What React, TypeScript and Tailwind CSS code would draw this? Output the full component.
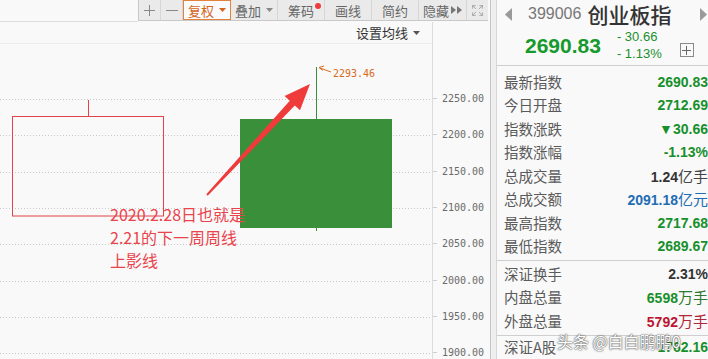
import { Expand } from "lucide-react";

// price -> y inside the plot canvas (canvas top sits 44px below the page top)
const py = (p: number) => Math.round(55 + (2250 - p) * 0.7267) + 0.5;

const LEVELS = [2250, 2200, 2150, 2100, 2050, 2000, 1950, 1900];

function arrowPoints(x1: number, y1: number, x2: number, y2: number) {
  const dx = x2 - x1;
  const dy = y2 - y1;
  const len = Math.hypot(dx, dy);
  const ux = dx / len;
  const uy = dy / len;
  const nx = -uy;
  const ny = ux;
  const head = 26;
  const hw = 10.5;
  const s0 = 1;
  const s1 = 3.4;
  const bx = x2 - ux * head;
  const by = y2 - uy * head;
  const pts = [
    [x1 + nx * s0, y1 + ny * s0],
    [bx + nx * s1, by + ny * s1],
    [bx + nx * hw, by + ny * hw],
    [x2, y2],
    [bx - nx * hw, by - ny * hw],
    [bx - nx * s1, by - ny * s1],
    [x1 - nx * s0, y1 - ny * s0],
  ];
  return pts.map((p) => p[0].toFixed(1) + "," + p[1].toFixed(1)).join(" ");
}

const GREEN = "text-[#17902b]";

const quote1 = [
  { label: "最新指数", value: "2690.83", color: GREEN },
  { label: "今日开盘", value: "2712.69", color: GREEN },
  { label: "指数涨跌", value: "▼30.66", color: GREEN },
  { label: "指数涨幅", value: "-1.13%", color: GREEN },
  { label: "总成交量", value: "1.24", unit: "亿手", color: "text-[#333333]", unitColor: "text-[#444444]" },
  { label: "总成交额", value: "2091.18", unit: "亿元", color: "text-[#1f6db3]", unitColor: "text-[#1f6db3]" },
  { label: "最高指数", value: "2717.68", color: GREEN },
  { label: "最低指数", value: "2689.67", color: GREEN },
];

const quote2 = [
  { label: "深证换手", value: "2.31%", color: "text-[#333333]" },
  { label: "内盘总量", value: "6598", unit: "万手", color: GREEN, unitColor: "text-[#2f7a30]" },
  { label: "外盘总量", value: "5792", unit: "万手", color: "text-[#bd1430]", unitColor: "text-[#b0283a]" },
];

function QuoteRow({ row }: { row: any }) {
  return (
    <div className="flex h-[23.5px] items-center justify-between pl-[7px]">
      <span className="text-[14.5px] text-[#5a5a5a] leading-none">{row.label}</span>
      <span className="flex items-baseline">
        <span className={`font-['Liberation_Sans',sans-serif] text-[14px] font-bold leading-none ${row.color}`}>
          {row.value}
        </span>
        {row.unit && <span className={`text-[15px] leading-none ${row.unitColor}`}>{row.unit}</span>}
      </span>
    </div>
  );
}

function ToolButton({ children, w, active }: { children: React.ReactNode; w: string; active?: boolean }) {
  return (
    <div
      className={`${w} relative flex items-center justify-center text-[13px] leading-none ${
        active
          ? "bg-[#fbfbfb] border border-[#e2823c] text-[#d4641c]"
          : "border-r border-[#d6d6d6] text-[#666666]"
      }`}
    >
      {children}
    </div>
  );
}

function Caret({ color = "#888" }: { color?: string }) {
  return (
    <svg width="7" height="4" className="ml-[5px]">
      <polygon points="0,0 7,0 3.5,4" fill={color} />
    </svg>
  );
}

export default function App() {
  return (
    <div className="relative flex h-[359px] w-[708px] overflow-hidden bg-[#f9f9f9] font-['Noto_Sans_CJK_SC',sans-serif]">
      {/* chart side */}
      <div className="flex w-[490px] flex-col">
        {/* toolbar */}
        <div className="flex h-[22px]">
          <div className="w-[138px] border-b border-[#dcdcdc]" />
          <div className="flex h-[21px] bg-[#eaeaea] border-l border-b border-[#c9c9c9]">
            <ToolButton w="w-[22px]">
              <svg width="11" height="11">
                <line x1="5.5" y1="0" x2="5.5" y2="11" stroke="#888" />
                <line x1="0" y1="5.5" x2="11" y2="5.5" stroke="#888" />
              </svg>
            </ToolButton>
            <ToolButton w="w-[22px]">
              <svg width="12" height="11">
                <line x1="0" y1="5.5" x2="12" y2="5.5" stroke="#888" />
              </svg>
            </ToolButton>
            <ToolButton w="w-[48px]" active>
              复权
              <Caret color="#d4641c" />
            </ToolButton>
            <ToolButton w="w-[47px]">
              叠加
              <Caret />
            </ToolButton>
            <ToolButton w="w-[47px]">
              筹码
              <span className="absolute right-[3px] top-[3px] h-[6px] w-[6px] rounded-full bg-[#ee3b3b]" />
            </ToolButton>
            <ToolButton w="w-[47px]">画线</ToolButton>
            <ToolButton w="w-[47px]">简约</ToolButton>
            <ToolButton w="w-[48px]">
              隐藏
              <svg width="11" height="8" className="ml-[2px]">
                <polygon points="0,0 5,4 0,8" fill="#777" />
                <polygon points="6,0 11,4 6,8" fill="#777" />
              </svg>
            </ToolButton>
            <div className="flex w-[21px] items-center justify-center">
              <Expand size={13} strokeWidth={1.2} className="text-[#8a8a8a]" />
            </div>
          </div>
        </div>

        <div className="flex flex-1">
          {/* plot */}
          <div className="flex w-[433px] flex-col border-r border-[#dcdcdc]">
            <div className="flex h-[22px] items-center justify-end border-b border-[#ececec] pr-[12px] text-[13px] text-[#333333]">
              设置均线
              <Caret color="#555" />
            </div>
            <div className="relative flex-1">
              <svg width="432" height="315" className="absolute left-0 top-0">
                {LEVELS.map((p) => (
                  <line key={p} x1="0" x2="432" y1={py(p)} y2={py(p)} stroke="#c9c9c9" strokeDasharray="1 2" />
                ))}
                {/* 2.21 week, hollow red */}
                <line x1="88.5" x2="88.5" y1="56" y2="72.5" stroke="#e0434c" />
                <rect x="12.5" y="72.5" width="151" height="99.5" fill="none" stroke="#e0434c" />
                {/* 2.28 week, solid green */}
                <line x1="316.5" x2="316.5" y1="23" y2="187" stroke="#3a8f3a" />
                <rect x="240" y="75" width="152" height="109" fill="#3a8f3a" />
                {/* high marker */}
                <line x1="331" y1="28" x2="320" y2="24" stroke="#d86a1c" />
                <polyline points="324,22 319,23.5 323,26.5" fill="none" stroke="#d86a1c" />
                <text x="333" y="32.5" fontSize="10" fill="#d86a1c" fontFamily="DejaVu Sans Mono, monospace">
                  2293.46
                </text>
                <polygon points={arrowPoints(207, 151, 310, 40)} fill="#f03b3b" />
              </svg>
              <div className="absolute left-[110px] top-[159px] text-[16px] leading-[23px] text-[#e9444c]">
                <div>2020.2.28日也就是</div>
                <div>2.21的下一周周线</div>
                <div>上影线</div>
              </div>
            </div>
          </div>
          {/* price axis */}
          <div className="flex flex-1 flex-col">
            <div className="h-[22px]" />
            <div className="relative flex-1">
              {LEVELS.map((p) => (
                <div
                  key={p}
                  className="absolute left-0 flex items-center font-['DejaVu_Sans_Mono',monospace] text-[10px] leading-none text-[#6a6a6a]"
                  style={{ top: py(p) - 6 }}
                >
                  <span className="mr-[5px] h-px w-[4px] bg-[#cfcfcf]" />
                  {p.toFixed(2)}
                </div>
              ))}
            </div>
          </div>
        </div>
      </div>

      {/* divider */}
      <div className="w-[7px] border-l border-[#c4c4c4] border-r border-r-[#d6d6d6] bg-[#efefef]" />

      {/* quote panel */}
      <div className="flex flex-1 flex-col">
        <div className="h-[66px] border-b border-[#cfcfcf]">
          <div className="flex h-[28px] items-center pl-[8px]">
            <svg width="7" height="13">
              <polygon points="7,0 0,6.5 7,13" fill="#9a9a9a" />
            </svg>
            <span className="ml-[16px] font-['Liberation_Sans',sans-serif] text-[16px] text-[#777777]">399006</span>
            <span className="ml-[6px] text-[21px] font-medium leading-none text-[#333333]">创业板指</span>
            <div className="flex-1" />
            <svg width="7" height="13" className="mr-[1px]">
              <polygon points="0,0 7,6.5 0,13" fill="#9a9a9a" />
            </svg>
          </div>
          <div className="flex items-center">
            <span className="ml-[28px] font-['Liberation_Sans',sans-serif] text-[21px] font-bold leading-none text-[#169a2c]">
              2690.83
            </span>
            <div className="ml-[16px] flex flex-col font-['Liberation_Sans',sans-serif] text-[13px] leading-[17px] text-[#1b8f2d]">
              <span>- 30.66</span>
              <span>- 1.13%</span>
            </div>
            <div className="ml-[18px] mt-[10px] flex h-[14px] w-[14px] items-center justify-center border border-[#8a8a8a]">
              <svg width="9" height="9">
                <line x1="4.5" y1="0" x2="4.5" y2="9" stroke="#666" />
                <line x1="0" y1="4.5" x2="9" y2="4.5" stroke="#666" />
              </svg>
            </div>
          </div>
        </div>

        <div className="border-b border-[#cfcfcf] pt-[4px] pb-[2px]">
          {quote1.map((r) => (
            <QuoteRow key={r.label} row={r} />
          ))}
        </div>
        <div className="border-b border-[#cfcfcf] pt-[1px] pb-[2px]">
          {quote2.map((r) => (
            <QuoteRow key={r.label} row={r} />
          ))}
        </div>
        <QuoteRow row={{ label: "深证A股", value: "1762.16", color: GREEN }} />
      </div>

      {/* publisher mark */}
      <div className="absolute left-[557px] top-[333px] text-[16px] leading-none text-white [text-shadow:0_0_2px_#444,0_0_1px_#444]">
        头条 @白白鹏鹏0
      </div>
    </div>
  );
}
